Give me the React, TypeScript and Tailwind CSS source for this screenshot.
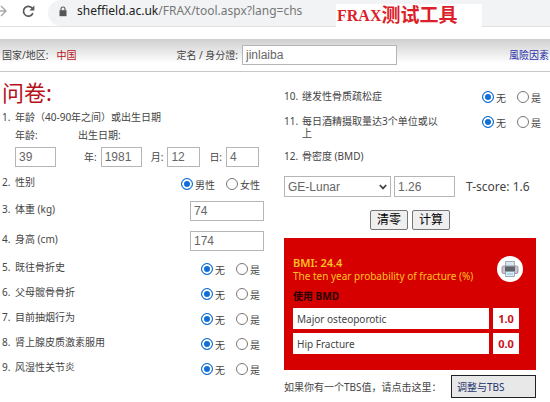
import type { ReactNode } from "react";

const riskFactors = [
  { no: 5, text: "既往骨折史" },
  { no: 6, text: "父母髋骨骨折" },
  { no: 7, text: "目前抽烟行为" },
  { no: 8, text: "肾上腺皮质激素服用" },
  { no: 9, text: "风湿性关节炎" },
];

const results = [
  { name: "Major osteoporotic", value: "1.0" },
  { name: "Hip Fracture", value: "0.0" },
];

const fieldClass =
  "h-5 min-w-0 rounded-none border border-[#b5b5b5] bg-white px-[3px] font-['Liberation_Sans','Noto_Sans_CJK_SC',sans-serif] text-[12px] leading-4 text-[#666]";

export default function App() {
  return (
    <div className="bg-white font-['Noto_Sans','Noto_Sans_CJK_SC',sans-serif] text-[10px] leading-3 text-[#444]">
      <BrowserBar />
      <PatientBar />
      <main className="grid grid-cols-[262fr_257fr] gap-5 pt-1 pr-[9px] pl-0.5">
        <section>
          <h1 className="h-8 text-[22px] leading-8 text-[#b5121b]">问卷:</h1>
          <BirthFields />
          <Row no={2} text="性别" className="h-6">
            <Choices name="sex" options={["男性", "女性"]} />
          </Row>
          <Row no={3} text="体重 (kg)" htmlFor="weight" className="h-[30px]">
            <input id="weight" defaultValue="74" className={`${fieldClass} w-[74px]`} />
          </Row>
          <Row no={4} text="身高 (cm)" htmlFor="height" className="h-[30px]">
            <input id="height" defaultValue="174" className={`${fieldClass} w-[74px]`} />
          </Row>
          {riskFactors.map((f) => (
            <Row key={f.no} no={f.no} text={f.text} className="h-[25px]">
              <Choices name={`q${f.no}`} options={["无", "是"]} />
            </Row>
          ))}
        </section>

        <section className="pt-1.5">
          <RightRow no={10} text="继发性骨质疏松症" className="h-[25px]" />
          <RightRow no={11} text="每日酒精摄取量达3个单位或以上" className="h-[37px]" />
          <div className="pr-[5px]">
            <div className="flex h-6 items-center">
              <label htmlFor="scanner" className="flex">
                <span className="w-[18px]">12.</span>骨密度 (BMD)
              </label>
            </div>
            <div className="mt-2 flex items-center gap-[3px]">
              <div className="relative">
                <select
                  id="scanner"
                  className={`${fieldClass} h-[21px] w-[107px] appearance-none px-2`}
                  defaultValue="GE-Lunar"
                >
                  <option>GE-Lunar</option>
                  <option>Hologic</option>
                  <option>T-Score</option>
                </select>
                <svg
                  viewBox="0 0 8 6"
                  className="pointer-events-none absolute top-2 right-1 h-1.5 w-2"
                  fill="none"
                  stroke="#444"
                  strokeWidth="1.8"
                >
                  <path d="M.8 1 4 4.400 7.200 1" />
                </svg>
              </div>
              <input aria-label="BMD" defaultValue="1.26" className={`${fieldClass} h-[21px] w-[61px]`} />
              <span className="ml-2 text-[12px] leading-4 whitespace-nowrap">T-score: 1.6</span>
            </div>
            <div className="mt-[13px] flex justify-center gap-1">
              <FormButton>清零</FormButton>
              <FormButton>计算</FormButton>
            </div>
            <ResultPanel />
            <div className="mt-[5px] flex items-center justify-between">
              <span className="whitespace-nowrap">如果你有一个TBS值，请点击这里：</span>
              <button className="h-[23px] w-[85px] border border-[#222] bg-[#e8e8e8] px-[5px] text-left text-[#26346e]">
                调整与TBS
              </button>
            </div>
          </div>
        </section>
      </main>
    </div>
  );
}

function BrowserBar() {
  return (
    <header className="relative h-[39px]">
      <div className="flex h-[27px] items-stretch border-b border-[#e2e2e2]">
        <div className="flex w-12 items-center gap-[15px] pb-1">
          <svg viewBox="0 0 7 14" className="h-3.5 w-[7px]" fill="none" stroke="#aaa" strokeWidth="1.5">
            <path d="M0 7h6M1 2l5 5-5 5" />
          </svg>
          <button aria-label="Reload">
            <svg viewBox="0 0 13 13" className="size-[13px]" fill="none" stroke="#5a5a5a" strokeWidth="1.7">
              <path d="M10.900 8.200A4.900 4.900 0 1 1 10.300 3.300" />
              <path d="M12.400.600v5H7.400z" fill="#5a5a5a" stroke="none" />
            </svg>
          </button>
        </div>
        <div className="flex flex-1 items-center gap-2.5 rounded-l-full bg-[#f1f3f4] pb-1 pl-[11px]">
          <svg viewBox="0 0 8 11" className="h-[11px] w-2">
            <path d="M.500 4.200h7v6h-7z" fill="#555" />
            <path d="M2 4.500V3a2 2 0 0 1 4 0v1.500" fill="none" stroke="#555" strokeWidth="1.100" />
          </svg>
          <span className="text-[12px] leading-4 text-[#777]">
            <span className="text-[#222]">sheffield.ac.uk</span>/FRAX/tool.aspx?lang=chs
          </span>
        </div>
      </div>
      <div className="absolute top-1 left-[336px] flex h-6 w-[146px] items-center bg-white pl-px font-['Liberation_Serif','Noto_Sans_CJK_SC',serif] font-bold text-[#dc1f2a]">
        <span className="text-[16px]">FRAX</span>
        <span className="text-[19px] leading-6">测试工具</span>
      </div>
    </header>
  );
}

function PatientBar() {
  return (
    <div className="flex h-[33px] items-center justify-between border-b border-[#c8c8c8] bg-linear-to-b from-[#cfcfcf] to-white to-75% pr-px pl-0.5">
      <div className="flex gap-2">
        <span>国家/地区:</span>
        <span className="text-[#b5121b]">中国</span>
      </div>
      <div className="flex items-center gap-1 pr-3">
        <label htmlFor="patient">定名 / 身分證:</label>
        <input id="patient" defaultValue="jinlaiba" className={`${fieldClass} w-[155px]`} />
      </div>
      <a href="#risk" className="text-[#2a2fa8]">
        風險因素
      </a>
    </div>
  );
}

function BirthFields() {
  return (
    <div className="pb-[5px]">
      <div className="flex h-[18px] items-center">
        <span className="w-[13px]">1.</span>年龄（40-90年之间）或出生日期
      </div>
      <div className="flex h-[18px] items-center pl-[13px]">
        <label htmlFor="age" className="w-[63px]">年龄:</label>
        <span>出生日期:</span>
      </div>
      <div className="mt-[3px] flex items-center pl-[13px]">
        <input id="age" defaultValue="39" className={`${fieldClass} w-[41px]`} />
        <label htmlFor="year" className="ml-7 pr-1">年:</label>
        <input id="year" defaultValue="1981" className={`${fieldClass} w-[41px]`} />
        <label htmlFor="month" className="ml-[9px] pr-1">月:</label>
        <input id="month" defaultValue="12" className={`${fieldClass} w-[33px]`} />
        <label htmlFor="day" className="ml-[9px] pr-1">日:</label>
        <input id="day" defaultValue="4" className={`${fieldClass} w-[33px]`} />
      </div>
    </div>
  );
}

function Row({
  no,
  text,
  htmlFor,
  className,
  children,
}: {
  no: number;
  text: string;
  htmlFor?: string;
  className: string;
  children: ReactNode;
}) {
  return (
    <div className={`flex items-center justify-between ${className}`}>
      <label htmlFor={htmlFor} className="flex pb-1">
        <span className="w-[13px]">{no}.</span>
        {text}
      </label>
      {children}
    </div>
  );
}

function RightRow({ no, text, className }: { no: number; text: string; className: string }) {
  return (
    <div className={`flex items-start justify-between pt-2 ${className}`}>
      <div className="flex">
        <span className="w-[18px]">{no}.</span>
        <span className="w-[142px]">{text}</span>
      </div>
      <div className="-mr-1">
        <Choices name={`q${no}`} options={["无", "是"]} />
      </div>
    </div>
  );
}

function Choices({ name, options }: { name: string; options: string[] }) {
  return (
    <div className="flex gap-[11px] pr-1">
      {options.map((option, i) => (
        <label key={option} className="flex items-center gap-0.5">
          <input
            type="radio"
            name={name}
            defaultChecked={i === 0}
            className="size-3 appearance-none rounded-full border border-[#777] bg-white checked:border-[#0f6fd6] checked:bg-[#0f6fd6] checked:shadow-[inset_0_0_0_2px_white]"
          />
          <span className="pt-0.5 leading-3">{option}</span>
        </label>
      ))}
    </div>
  );
}

function FormButton({ children }: { children: ReactNode }) {
  return (
    <button className="h-5 rounded-xs border border-[#777] bg-[#efefef] px-1.5 text-[12px] leading-4 text-black">
      {children}
    </button>
  );
}

function ResultPanel() {
  return (
    <div className="mt-2 h-[132px] bg-[#d60000] pt-[18px] pr-[13px] pl-[9px]">
      <div className="flex items-start justify-between text-[#ffc222]">
        <div>
          <p className="text-[11px] leading-[14px] font-semibold">BMI: 24.4</p>
          <p className="leading-3 whitespace-nowrap">The ten year probability of fracture (%)</p>
        </div>
        <button
          aria-label="Print"
          className="flex size-[26px] items-center justify-center rounded-full bg-white"
        >
          <PrinterIcon />
        </button>
      </div>
      <p className="mt-1.5 leading-4 font-bold text-[#260000]">使用 BMD</p>
      <table className="-mx-1 border-separate border-spacing-x-1 border-spacing-y-1">
        <tbody>
          {results.map((r) => (
            <tr key={r.name}>
              <td className="h-[21px] w-[196px] bg-white px-1">{r.name}</td>
              <td className="h-[21px] w-[26px] bg-white text-center text-[11px] font-bold text-[#c8101c]">
                {r.value}
              </td>
            </tr>
          ))}
        </tbody>
      </table>
    </div>
  );
}

function PrinterIcon() {
  return (
    <svg viewBox="0 0 18 18" className="size-[18px]">
      <path d="M4.500 1.500h9v6h-9z" fill="#d5e8f2" stroke="#8d9aa5" strokeWidth=".8" />
      <rect x="1" y="6" width="16" height="7.500" rx="1.500" fill="#c9c4cf" stroke="#8d7f90" strokeWidth=".8" />
      <path d="M4 6.500h10v5H4z" fill="#5d6468" />
      <path d="M4.500 11.500h9v5h-9z" fill="#d7edf7" stroke="#8699a5" strokeWidth=".8" />
      <path d="M6 14h6" stroke="#7fb4d0" strokeWidth=".8" />
    </svg>
  );
}
